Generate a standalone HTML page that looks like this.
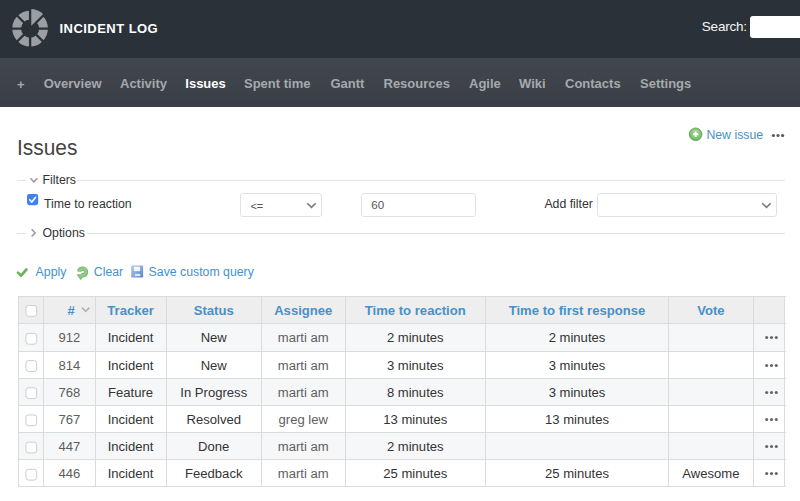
<!DOCTYPE html><html><head><meta charset="utf-8"><title>Issues - Incident Log</title><style>
*{box-sizing:border-box;margin:0;padding:0}
html,body{width:800px;height:501px;overflow:hidden;background:#fff}
body{font-family:"Liberation Sans",Arial,Helvetica,sans-serif;font-size:12.3px;color:#333;position:relative}
.abs{position:absolute;white-space:nowrap}
#top{left:0;top:0;width:800px;height:58px;background:#2b3139}
#nav{left:0;top:58px;width:800px;height:49px;background:linear-gradient(#42474f,#3a3f47)}
.nv{top:75.1px;font-size:13px;font-weight:bold;color:#a6a9ad;line-height:18px}
.nv.sel{color:#fff}
#title{left:59.5px;top:19.6px;font-size:13px;font-weight:bold;color:#fff;letter-spacing:0.46px;line-height:18px}
#srch{left:701.8px;top:18.3px;font-size:13.5px;color:#f4f4f4;line-height:18px;letter-spacing:-0.2px}
#sinp{left:750.2px;top:15.6px;width:60px;height:22.2px;background:#fff;border-radius:3px}
h2{left:16.6px;top:130.8px;font-size:22.7px;font-weight:normal;color:#444;line-height:32px;transform:scaleX(0.92);transform-origin:0 0}
a{color:#4691ca;text-decoration:none}
.t{font-size:12.3px;line-height:16px;color:#333}
a.t{color:#4691ca}
.ln{height:1px;background:#e3e3e3}
.box{border:1px solid #dfe2e5;border-radius:3px;background:#fff}
.cell{font-size:13.08px;line-height:16px;text-align:center;color:#333}
.hd{font-weight:bold;font-size:13.1px;color:#4691ca}
.gr{color:#5e5e5e}
.cb{width:12px;height:12px;border:1px solid #cfcfcf;border-radius:2.5px;background:#fff}
.dots{font-size:13px;font-weight:bold;color:#555;letter-spacing:0.5px}
</style></head><body>
<div class="abs" id="top"></div><div class="abs" id="nav"></div>
<svg class="abs" style="left:0;top:0" width="70" height="58" viewBox="0 0 70 58"><circle cx="30.1" cy="28.6" r="13.45" fill="none" stroke="#9b9ea2" stroke-width="8.700000000000001"/><path fill="#2b3139" d="M30.1 28.6L30.1 9.8A18.8 18.8 0 0 1 43.39 15.31Z"/><path fill="#9b9ea2" d="M30.1 28.6L30.10 9.10A19.5 19.5 0 0 1 43.89 14.81Z"/><path d="M30.10 49.60L30.10 7.60" stroke="#2b3139" stroke-width="2.35" fill="none"/><path d="M15.25 43.45L44.95 13.75" stroke="#2b3139" stroke-width="2.35" fill="none"/><path d="M9.10 28.60L51.10 28.60" stroke="#2b3139" stroke-width="2.35" fill="none"/><path d="M15.25 13.75L44.95 43.45" stroke="#2b3139" stroke-width="2.35" fill="none"/></svg>
<div class="abs" id="title">INCIDENT LOG</div>
<div class="abs" id="srch">Search:</div><div class="abs" id="sinp"></div>
<a class="abs nv" style="left:17px;top:75.8px">+</a>
<a class="abs nv" style="left:43.7px">Overview</a>
<a class="abs nv" style="left:120px">Activity</a>
<a class="abs nv sel" style="left:185.3px">Issues</a>
<a class="abs nv" style="left:244px">Spent time</a>
<a class="abs nv" style="left:330.5px">Gantt</a>
<a class="abs nv" style="left:383.5px">Resources</a>
<a class="abs nv" style="left:469px">Agile</a>
<a class="abs nv" style="left:519px">Wiki</a>
<a class="abs nv" style="left:565px">Contacts</a>
<a class="abs nv" style="left:640px">Settings</a>
<h2 class="abs">Issues</h2>
<svg class="abs" style="left:688px;top:127px" width="15" height="15" viewBox="0 0 15 15"><defs><radialGradient id="g1" cx="0.5" cy="0.35" r="0.7"><stop offset="0" stop-color="#a5d79a"/><stop offset="1" stop-color="#6cb25f"/></radialGradient></defs><circle cx="7.6" cy="7.3" r="6.3" fill="url(#g1)" stroke="#67ad5b" stroke-width="1"/><path d="M7.6 4.5v5.6M4.8 7.3h5.6" stroke="#fff" stroke-width="2"/></svg>
<a class="abs t" style="left:706.4px;top:126.5px">New issue</a>
<svg class="abs" style="left:770px;top:132px" width="16" height="7" viewBox="0 0 16 7"><circle cx="3.4" cy="3.5" r="1.6" fill="#5a5a5a"/><circle cx="8" cy="3.5" r="1.6" fill="#5a5a5a"/><circle cx="12.6" cy="3.5" r="1.6" fill="#5a5a5a"/></svg>
<div class="abs ln" style="left:17px;top:180px;width:9px"></div><div class="abs ln" style="left:77.4px;top:180px;width:707.6px"></div>
<svg class="abs" style="left:28px;top:175px" width="12" height="10" viewBox="0 0 12 10"><path d="M2.4 3.2l3.5 3.6 3.5-3.6" fill="none" stroke="#9a9a9a" stroke-width="1.5"/></svg>
<div class="abs t" style="left:42.5px;top:172.3px">Filters</div>
<svg class="abs" style="left:27px;top:193.8px" width="12" height="12" viewBox="0 0 12 12"><rect x="0" y="0" width="11.2" height="11.2" rx="2.4" fill="#3b82f6"/><path d="M2.7 5.8l2.1 2.3 3.8-4.8" fill="none" stroke="#fff" stroke-width="1.6" stroke-linecap="round" stroke-linejoin="round"/></svg>
<div class="abs t" style="left:44px;top:196px">Time to reaction</div>
<div class="abs box" style="left:240px;top:193px;width:82px;height:24px"></div><div class="abs t" style="left:250.4px;top:198.2px;font-size:11px;color:#555">&lt;=</div>
<svg class="abs" style="left:305px;top:201px" width="13" height="9" viewBox="0 0 13 9"><path d="M2.3 2.2l4.2 4.2 4.2-4.2" fill="none" stroke="#7a7a7a" stroke-width="1.6"/></svg>
<div class="abs box" style="left:361px;top:193px;width:115px;height:24px"></div><div class="abs t" style="left:371.2px;top:196.9px;font-size:11.6px;color:#555">60</div>
<div class="abs t" style="left:544.4px;top:196.2px">Add filter</div>
<div class="abs box" style="left:597px;top:193px;width:180px;height:24px"></div>
<svg class="abs" style="left:759.5px;top:201px" width="13" height="9" viewBox="0 0 13 9"><path d="M2.3 2.2l4.2 4.2 4.2-4.2" fill="none" stroke="#7a7a7a" stroke-width="1.6"/></svg>
<div class="abs ln" style="left:17px;top:233px;width:9px"></div><div class="abs ln" style="left:87px;top:233px;width:698px"></div>
<svg class="abs" style="left:29px;top:227px" width="10" height="12" viewBox="0 0 10 12"><path d="M2.6 2.2l3.6 3.7-3.6 3.7" fill="none" stroke="#9a9a9a" stroke-width="1.5"/></svg>
<div class="abs t" style="left:42.5px;top:225.2px">Options</div>
<svg class="abs" style="left:15px;top:265px" width="14" height="14" viewBox="0 0 14 14"><path d="M3 7.6l3.1 3.1 5.3-6.2" fill="none" stroke="#6cb45c" stroke-width="2.7" stroke-linecap="round" stroke-linejoin="round"/></svg>
<a class="abs t" style="left:35.6px;top:263.7px">Apply</a>
<svg class="abs" style="left:75px;top:264px" width="16" height="17" viewBox="0 0 16 17"><path d="M4.33 7.54A3.3 3.3 0 1 1 5.71 10.70" fill="none" stroke="#6aab5f" stroke-width="4.5"/><path d="M2.4 10.7l5.6 0.5-2.3 4.3z" fill="#6aab5f" stroke="#6aab5f" stroke-width="0.8" stroke-linejoin="round"/><path d="M4.33 7.54A3.3 3.3 0 1 1 5.71 10.70" fill="none" stroke="#90cb86" stroke-width="3.1"/><path d="M3.2 11.2l4 0.4-1.6 3z" fill="#90cb86"/><circle cx="7.6" cy="8.0" r="1.15" fill="#fff"/></svg>
<a class="abs t" style="left:93.8px;top:263.7px">Clear</a>
<svg class="abs" style="left:130px;top:264px" width="15" height="15" viewBox="0 0 15 15"><defs><linearGradient id="g2" x1="0" y1="0" x2="1" y2="1"><stop offset="0" stop-color="#b3cbf0"/><stop offset="0.5" stop-color="#84a8e2"/><stop offset="1" stop-color="#5380cd"/></linearGradient></defs><rect x="1.2" y="1.4" width="11.9" height="12" rx="1.2" fill="url(#g2)"/><rect x="3.9" y="2.7" width="6.2" height="4.4" fill="#f3f7fd"/><rect x="4.9" y="9.9" width="5.5" height="2.2" fill="#e6e6e6"/></svg>
<a class="abs t" style="left:148.6px;top:263.5px">Save custom query</a>
<div class="abs" style="left:18px;top:296.7px;width:766.8px;height:27.100000000000023px;background:#eeeeee"></div>
<div class="abs" style="left:18px;top:323.8px;width:766.8px;height:27.44999999999999px;background:#f6f7f8"></div>
<div class="abs" style="left:18px;top:351.25px;width:766.8px;height:27.05000000000001px;background:#fff"></div>
<div class="abs" style="left:18px;top:378.3px;width:766.8px;height:27.19999999999999px;background:#f6f7f8"></div>
<div class="abs" style="left:18px;top:405.5px;width:766.8px;height:26.899999999999977px;background:#fff"></div>
<div class="abs" style="left:18px;top:432.4px;width:766.8px;height:27.200000000000045px;background:#f6f7f8"></div>
<div class="abs" style="left:18px;top:459.6px;width:766.8px;height:27.19999999999999px;background:#fff"></div>
<div class="abs" style="left:18px;top:296.2px;width:767.8px;height:1px;background:#dbdbdb"></div>
<div class="abs" style="left:18px;top:323.3px;width:767.8px;height:1px;background:#dbdbdb"></div>
<div class="abs" style="left:18px;top:350.75px;width:767.8px;height:1px;background:#dbdbdb"></div>
<div class="abs" style="left:18px;top:377.8px;width:767.8px;height:1px;background:#dbdbdb"></div>
<div class="abs" style="left:18px;top:405.0px;width:767.8px;height:1px;background:#dbdbdb"></div>
<div class="abs" style="left:18px;top:431.9px;width:767.8px;height:1px;background:#dbdbdb"></div>
<div class="abs" style="left:18px;top:459.1px;width:767.8px;height:1px;background:#dbdbdb"></div>
<div class="abs" style="left:18px;top:486.3px;width:767.8px;height:1px;background:#dbdbdb"></div>
<div class="abs" style="left:17.5px;top:296.7px;width:1px;height:190.10000000000002px;background:#dbdbdb"></div>
<div class="abs" style="left:43.1px;top:296.7px;width:1px;height:190.10000000000002px;background:#dbdbdb"></div>
<div class="abs" style="left:94.7px;top:296.7px;width:1px;height:190.10000000000002px;background:#dbdbdb"></div>
<div class="abs" style="left:165.5px;top:296.7px;width:1px;height:190.10000000000002px;background:#dbdbdb"></div>
<div class="abs" style="left:261.0px;top:296.7px;width:1px;height:190.10000000000002px;background:#dbdbdb"></div>
<div class="abs" style="left:344.5px;top:296.7px;width:1px;height:190.10000000000002px;background:#dbdbdb"></div>
<div class="abs" style="left:485.0px;top:296.7px;width:1px;height:190.10000000000002px;background:#dbdbdb"></div>
<div class="abs" style="left:668.0px;top:296.7px;width:1px;height:190.10000000000002px;background:#dbdbdb"></div>
<div class="abs" style="left:752.9px;top:296.7px;width:1px;height:190.10000000000002px;background:#dbdbdb"></div>
<div class="abs" style="left:784.3px;top:296.7px;width:1px;height:190.10000000000002px;background:#dbdbdb"></div>
<div class="abs cell hd" style="left:67.6px;top:302.85px">#</div>
<svg class="abs" style="left:80px;top:306.25px" width="11" height="8" viewBox="0 0 11 8"><path d="M2 1.6l3.7 3.7 3.7-3.7" fill="none" stroke="#b2b2b2" stroke-width="1.6"/></svg>
<div class="abs cell hd" style="left:95.2px;width:70.8px;top:302.95px">Tracker</div>
<div class="abs cell hd" style="left:166px;width:95.5px;top:302.95px">Status</div>
<div class="abs cell hd" style="left:261.5px;width:83.5px;top:302.95px">Assignee</div>
<div class="abs cell hd" style="left:345px;width:140.5px;top:302.95px">Time to reaction</div>
<div class="abs cell hd" style="left:485.5px;width:183.0px;top:302.95px">Time to first response</div>
<div class="abs cell hd" style="left:668.5px;width:84.89999999999998px;top:302.95px">Vote</div>
<svg class="abs" style="left:24px;top:304px" width="15" height="15" viewBox="0 0 15 15"><rect x="1.9" y="1.50" width="10.8" height="10.8" rx="2.6" fill="#fff" stroke="#cdcdcd" stroke-width="1"/></svg>
<svg class="abs" style="left:24px;top:331px" width="15" height="15" viewBox="0 0 15 15"><rect x="1.9" y="2.40" width="10.8" height="10.8" rx="2.6" fill="#fff" stroke="#cdcdcd" stroke-width="1"/></svg>
<svg class="abs" style="left:24px;top:359px" width="15" height="15" viewBox="0 0 15 15"><rect x="1.9" y="1.58" width="10.8" height="10.8" rx="2.6" fill="#fff" stroke="#cdcdcd" stroke-width="1"/></svg>
<svg class="abs" style="left:24px;top:386px" width="15" height="15" viewBox="0 0 15 15"><rect x="1.9" y="1.76" width="10.8" height="10.8" rx="2.6" fill="#fff" stroke="#cdcdcd" stroke-width="1"/></svg>
<svg class="abs" style="left:24px;top:413px" width="15" height="15" viewBox="0 0 15 15"><rect x="1.9" y="1.94" width="10.8" height="10.8" rx="2.6" fill="#fff" stroke="#cdcdcd" stroke-width="1"/></svg>
<svg class="abs" style="left:24px;top:440px" width="15" height="15" viewBox="0 0 15 15"><rect x="1.9" y="2.12" width="10.8" height="10.8" rx="2.6" fill="#fff" stroke="#cdcdcd" stroke-width="1"/></svg>
<svg class="abs" style="left:24px;top:467px" width="15" height="15" viewBox="0 0 15 15"><rect x="1.9" y="2.30" width="10.8" height="10.8" rx="2.6" fill="#fff" stroke="#cdcdcd" stroke-width="1"/></svg>
<div class="abs cell  gr" style="left:43.6px;width:51.6px;top:330.27px">912</div>
<div class="abs cell " style="left:95.2px;width:70.8px;top:330.27px">Incident</div>
<div class="abs cell " style="left:166px;width:95.5px;top:330.27px">New</div>
<div class="abs cell  gr" style="left:261.5px;width:83.5px;top:330.27px">marti am</div>
<div class="abs cell " style="left:345px;width:140.5px;top:330.27px">2 minutes</div>
<div class="abs cell " style="left:485.5px;width:183.0px;top:330.27px">2 minutes</div>
<svg class="abs" style="left:764px;top:334.325px" width="16" height="7" viewBox="0 0 16 7"><circle cx="2.7" cy="3.5" r="1.55" fill="#666"/><circle cx="7.5" cy="3.5" r="1.55" fill="#666"/><circle cx="12.3" cy="3.5" r="1.55" fill="#666"/></svg>
<div class="abs cell  gr" style="left:43.6px;width:51.6px;top:357.52px">814</div>
<div class="abs cell " style="left:95.2px;width:70.8px;top:357.52px">Incident</div>
<div class="abs cell " style="left:166px;width:95.5px;top:357.52px">New</div>
<div class="abs cell  gr" style="left:261.5px;width:83.5px;top:357.52px">marti am</div>
<div class="abs cell " style="left:345px;width:140.5px;top:357.52px">3 minutes</div>
<div class="abs cell " style="left:485.5px;width:183.0px;top:357.52px">3 minutes</div>
<svg class="abs" style="left:764px;top:361.575px" width="16" height="7" viewBox="0 0 16 7"><circle cx="2.7" cy="3.5" r="1.55" fill="#666"/><circle cx="7.5" cy="3.5" r="1.55" fill="#666"/><circle cx="12.3" cy="3.5" r="1.55" fill="#666"/></svg>
<div class="abs cell  gr" style="left:43.6px;width:51.6px;top:384.65px">768</div>
<div class="abs cell " style="left:95.2px;width:70.8px;top:384.65px">Feature</div>
<div class="abs cell " style="left:166px;width:95.5px;top:384.65px">In Progress</div>
<div class="abs cell  gr" style="left:261.5px;width:83.5px;top:384.65px">marti am</div>
<div class="abs cell " style="left:345px;width:140.5px;top:384.65px">8 minutes</div>
<div class="abs cell " style="left:485.5px;width:183.0px;top:384.65px">3 minutes</div>
<svg class="abs" style="left:764px;top:388.7px" width="16" height="7" viewBox="0 0 16 7"><circle cx="2.7" cy="3.5" r="1.55" fill="#666"/><circle cx="7.5" cy="3.5" r="1.55" fill="#666"/><circle cx="12.3" cy="3.5" r="1.55" fill="#666"/></svg>
<div class="abs cell  gr" style="left:43.6px;width:51.6px;top:411.70px">767</div>
<div class="abs cell " style="left:95.2px;width:70.8px;top:411.70px">Incident</div>
<div class="abs cell " style="left:166px;width:95.5px;top:411.70px">Resolved</div>
<div class="abs cell  gr" style="left:261.5px;width:83.5px;top:411.70px">greg lew</div>
<div class="abs cell " style="left:345px;width:140.5px;top:411.70px">13 minutes</div>
<div class="abs cell " style="left:485.5px;width:183.0px;top:411.70px">13 minutes</div>
<svg class="abs" style="left:764px;top:415.75px" width="16" height="7" viewBox="0 0 16 7"><circle cx="2.7" cy="3.5" r="1.55" fill="#666"/><circle cx="7.5" cy="3.5" r="1.55" fill="#666"/><circle cx="12.3" cy="3.5" r="1.55" fill="#666"/></svg>
<div class="abs cell  gr" style="left:43.6px;width:51.6px;top:438.75px">447</div>
<div class="abs cell " style="left:95.2px;width:70.8px;top:438.75px">Incident</div>
<div class="abs cell " style="left:166px;width:95.5px;top:438.75px">Done</div>
<div class="abs cell  gr" style="left:261.5px;width:83.5px;top:438.75px">marti am</div>
<div class="abs cell " style="left:345px;width:140.5px;top:438.75px">2 minutes</div>
<svg class="abs" style="left:764px;top:442.8px" width="16" height="7" viewBox="0 0 16 7"><circle cx="2.7" cy="3.5" r="1.55" fill="#666"/><circle cx="7.5" cy="3.5" r="1.55" fill="#666"/><circle cx="12.3" cy="3.5" r="1.55" fill="#666"/></svg>
<div class="abs cell  gr" style="left:43.6px;width:51.6px;top:465.95px">446</div>
<div class="abs cell " style="left:95.2px;width:70.8px;top:465.95px">Incident</div>
<div class="abs cell " style="left:166px;width:95.5px;top:465.95px">Feedback</div>
<div class="abs cell  gr" style="left:261.5px;width:83.5px;top:465.95px">marti am</div>
<div class="abs cell " style="left:345px;width:140.5px;top:465.95px">25 minutes</div>
<div class="abs cell " style="left:485.5px;width:183.0px;top:465.95px">25 minutes</div>
<div class="abs cell " style="left:668.5px;width:84.89999999999998px;top:465.95px">Awesome</div>
<svg class="abs" style="left:764px;top:470.00000000000006px" width="16" height="7" viewBox="0 0 16 7"><circle cx="2.7" cy="3.5" r="1.55" fill="#666"/><circle cx="7.5" cy="3.5" r="1.55" fill="#666"/><circle cx="12.3" cy="3.5" r="1.55" fill="#666"/></svg>
</body></html>
